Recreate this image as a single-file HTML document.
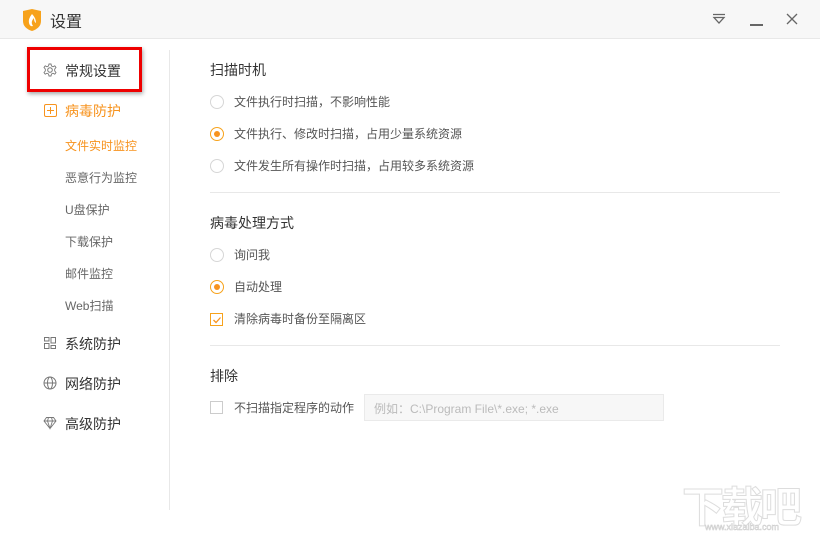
<!DOCTYPE html>
<html><head><meta charset="utf-8"><style>
*{margin:0;padding:0;box-sizing:border-box}
body{width:820px;height:540px;background:#fff;font-family:"Liberation Sans","Noto Sans CJK SC",sans-serif;position:relative;overflow:hidden;color:#555}
.a{position:absolute;white-space:nowrap}
.tb{position:absolute;left:0;top:0;width:820px;height:39px;background:#f7f7f7;border-bottom:1px solid #e8e8e8}
.s{font-size:12px;color:#555}
.h{font-size:14px;color:#333}
.o{font-size:12px;color:#666}
.r{position:absolute;width:14px;height:14px;border:1px solid #d6d6d6;border-radius:50%}
.r.on{border-color:#f7a21b}
.r.on::after{content:"";position:absolute;left:3px;top:3px;width:6px;height:6px;border-radius:50%;background:#f7931e}
.c{position:absolute;width:13px;height:13px;border:1px solid #ccc}
.hr{position:absolute;left:210px;width:570px;height:1px;background:#e8e8e8}
</style></head><body>
<div class="tb"></div>
<svg class="a" style="left:22px;top:9px" width="20" height="22" viewBox="0 0 20 22"><path d="M1 2 L10 0 L19 2 L19 12 Q19 19 10 22 Q1 19 1 12Z" fill="#f7a21b"/><path d="M10 5 Q6 10 7 14 Q8 18 11 17 Q8 13 12 9 Q12 13 14 14 Q14 9 10 5Z" fill="#fff"/></svg>
<div class="a" style="left:50px;top:8px;font-size:16px;color:#333">设置</div>
<svg class="a" style="left:712px;top:13px" width="14" height="12"><path d="M1 1.5H13M2 4.5H12L7 10Z" stroke="#666" fill="none" stroke-width="1.3"/></svg>
<div class="a" style="left:750px;top:24px;width:13px;height:1.5px;background:#666"></div>
<svg class="a" style="left:786px;top:13px" width="12" height="12"><path d="M1 1L11 11M11 1L1 11" stroke="#666" stroke-width="1.3"/></svg>
<div class="a" style="left:169px;top:50px;width:1px;height:460px;background:#e8e8e8"></div>
<div class="a" style="left:27px;top:47px;width:115px;height:45px;border:3px solid #e00;box-shadow:1px 2px 4px rgba(0,0,0,.35)"></div>
<svg class="a" style="left:43px;top:63px" width="14" height="14" viewBox="0 0 14 14"><circle cx="7" cy="7" r="2.3" fill="none" stroke="#777"/><path d="M6 1H8L8.5 3 10 3.8 11.8 2.8 13 4.5 11.7 6 11.7 8 13 9.5 11.8 11.2 10 10.2 8.5 11 8 13H6L5.5 11 4 10.2 2.2 11.2 1 9.5 2.3 8 2.3 6 1 4.5 2.2 2.8 4 3.8 5.5 3Z" fill="none" stroke="#777" stroke-width=".9"/></svg>
<div class="a h" style="left:65px;top:61px">常规设置</div>
<div class="a" style="left:44px;top:104px;width:13px;height:13px;border:1.3px solid #f7931e;border-radius:2px"></div>
<div class="a" style="left:47px;top:110px;width:7px;height:1.3px;background:#f7931e"></div>
<div class="a" style="left:50px;top:107px;width:1.3px;height:7px;background:#f7931e"></div>
<div class="a h" style="left:65px;top:101px;color:#f7931e">病毒防护</div>
<div class="a o" style="left:65px;top:137px;color:#f7931e">文件实时监控</div>
<div class="a o" style="left:65px;top:169px">恶意行为监控</div>
<div class="a o" style="left:65px;top:201px">U盘保护</div>
<div class="a o" style="left:65px;top:233px">下载保护</div>
<div class="a o" style="left:65px;top:265px">邮件监控</div>
<div class="a o" style="left:65px;top:297px">Web扫描</div>
<svg class="a" style="left:43px;top:336px" width="14" height="14"><path d="M1.5 1.5H6V5H1.5ZM1.5 7.5H6V12.5H1.5ZM8 1.5H12.5V7H8ZM8 9.5H12.5V12.5H8Z" fill="none" stroke="#777"/></svg>
<div class="a h" style="left:65px;top:334px">系统防护</div>
<svg class="a" style="left:43px;top:376px" width="14" height="14"><circle cx="7" cy="7" r="6" fill="none" stroke="#777"/><ellipse cx="7" cy="7" rx="2.5" ry="6" fill="none" stroke="#777"/><path d="M1 7H13" stroke="#777"/></svg>
<div class="a h" style="left:65px;top:374px">网络防护</div>
<svg class="a" style="left:43px;top:416px" width="14" height="14"><path d="M3.5 1.5H10.5L13 5 7 12.5 1 5ZM1 5H13M5.5 1.5 4.5 5 7 12.5 9.5 5 8.5 1.5" fill="none" stroke="#777" stroke-width=".9"/></svg>
<div class="a h" style="left:65px;top:414px">高级防护</div>

<div class="a h" style="left:210px;top:60px">扫描时机</div>
<div class="r" style="left:210px;top:95px"></div><div class="a s" style="left:234px;top:93px">文件执行时扫描，不影响性能</div>
<div class="r on" style="left:210px;top:127px"></div><div class="a s" style="left:234px;top:125px">文件执行、修改时扫描，占用少量系统资源</div>
<div class="r" style="left:210px;top:159px"></div><div class="a s" style="left:234px;top:157px">文件发生所有操作时扫描，占用较多系统资源</div>
<div class="hr" style="top:192px"></div>
<div class="a h" style="left:210px;top:213px">病毒处理方式</div>
<div class="r" style="left:210px;top:248px"></div><div class="a s" style="left:234px;top:246px">询问我</div>
<div class="r on" style="left:210px;top:280px"></div><div class="a s" style="left:234px;top:278px">自动处理</div>
<div class="c" style="left:210px;top:313px;border-color:#f7a21b"></div>
<svg class="a" style="left:212px;top:315px" width="10" height="10"><path d="M1.5 5 4 7.5 8.5 2.5" stroke="#f7931e" stroke-width="1.3" fill="none"/></svg>
<div class="a s" style="left:234px;top:310px">清除病毒时备份至隔离区</div>
<div class="hr" style="top:345px"></div>
<div class="a h" style="left:210px;top:366px">排除</div>
<div class="c" style="left:210px;top:401px"></div>
<div class="a s" style="left:234px;top:399px">不扫描指定程序的动作</div>
<div class="a" style="left:364px;top:394px;width:300px;height:27px;background:#f7f7f7;border:1px solid #eaeaea;font-size:12px;color:#bbb;padding:5px 9px">例如：C:\Program File\*.exe; *.exe</div>
<div class="a" style="left:682px;top:474px;font-size:42px;font-weight:bold;color:#fff;-webkit-text-stroke:1px #ddd;letter-spacing:-3px">下载吧</div>
<div class="a" style="left:705px;top:522px;font-size:9px;color:#fff;-webkit-text-stroke:.5px #ccc">www.xiazaiba.com</div>
</body></html>
